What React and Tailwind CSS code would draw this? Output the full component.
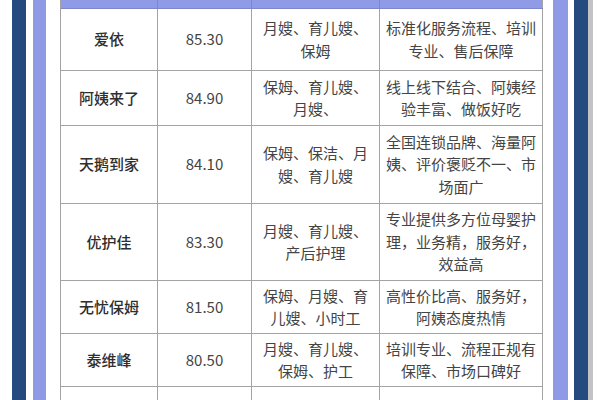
import React from "react";

const rows = [
  { h: "h-[62px]", name: "爱依", score: "85.30", svc: "月嫂、育儿嫂、保姆", feat: "标准化服务流程、培训专业、售后保障" },
  { h: "h-[55px]", name: "阿姨来了", score: "84.90", svc: "保姆、育儿嫂、月嫂、", feat: "线上线下结合、阿姨经验丰富、做饭好吃" },
  { h: "h-[78px]", name: "天鹅到家", score: "84.10", svc: "保姆、保洁、月嫂、育儿嫂", feat: "全国连锁品牌、海量阿姨、评价褒贬不一、市场面广" },
  { h: "h-[77px]", name: "优护佳", score: "83.30", svc: "月嫂、育儿嫂、产后护理", feat: "专业提供多方位母婴护理，业务精，服务好，效益高" },
  { h: "h-[53px]", name: "无忧保姆", score: "81.50", svc: "保姆、月嫂、育儿嫂、小时工", feat: "高性价比高、服务好，阿姨态度热情" },
  { h: "h-[53px]", name: "泰维峰", score: "80.50", svc: "月嫂、育儿嫂、保姆、护工", feat: "培训专业、流程正规有保障、市场口碑好" },
  { h: "h-[60px]", name: "", score: "", svc: "", feat: "" },
];

const cell = "flex items-center justify-center text-center border-r border-[#a3a3a3] px-[6px] leading-[22.5px]";

export default function App() {
  return (
    <div
      className="w-[600px] h-[400px] overflow-hidden bg-white flex"
      style={{ fontFamily: '"Noto Sans CJK SC", "Noto Sans", sans-serif' }}
    >
      <div className="w-[12px] shrink-0" />
      <div className="w-[14px] shrink-0 bg-[#244a7f]" />
      <div className="w-[7px] shrink-0" />
      <div className="w-[13px] shrink-0 bg-[#8e9ae6]" />
      <div className="w-[14px] shrink-0" />
      <div className="w-[483px] shrink-0 border-l border-[#a3a3a3] flex flex-col text-[15px]">
        <div className="h-[9px] shrink-0 bg-[#8f9be7] border-b border-[#7d87c9] grid grid-cols-[97px_94px_128px_163px]">
          <div className="border-r border-[#7d87c9]" />
          <div className="border-r border-[#7d87c9]" />
          <div className="border-r border-[#7d87c9]" />
          <div className="border-r border-[#a3a3a3]" />
        </div>
        {rows.map((r, i) => (
          <div key={i} className={`${r.h} shrink-0 grid grid-cols-[97px_94px_128px_163px] border-b border-[#a3a3a3]`}>
            <div className={`${cell} text-[#2e2e2e] font-medium`}>{r.name}</div>
            <div className={`${cell} text-[#444]`}>{r.score}</div>
            <div className={`${cell} text-[#444]`}>{r.svc}</div>
            <div className={`${cell} text-[#444]`}>{r.feat}</div>
          </div>
        ))}
      </div>
      <div className="w-[10px] shrink-0" />
      <div className="w-[15px] shrink-0 bg-[#8e9ae6]" />
      <div className="w-[6px] shrink-0" />
      <div className="w-[14px] shrink-0 bg-[#244a7f]" />
      <div className="w-[5px] shrink-0 bg-[#c3c3c6]" />
      <div className="w-[7px] shrink-0" />
    </div>
  );
}
